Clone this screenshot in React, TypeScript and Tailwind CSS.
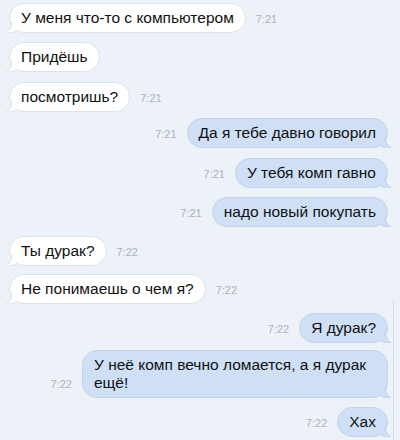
import React from 'react';

type Msg = {
  text: string;
  time: string;
  out: boolean;
  mt: string;
};

const messages: Msg[] = [
  { text: 'У меня что-то с компьютером', time: '7:21', out: false, mt: 'mt-[3px]' },
  { text: 'Придёшь', time: '', out: false, mt: 'mt-[9px]' },
  { text: 'посмотришь?', time: '7:21', out: false, mt: 'mt-[10px]' },
  { text: 'Да я тебе давно говорил', time: '7:21', out: true, mt: 'mt-[6px]' },
  { text: 'У тебя комп гавно', time: '7:21', out: true, mt: 'mt-[10px]' },
  { text: 'надо новый покупать', time: '7:21', out: true, mt: 'mt-[9px]' },
  { text: 'Ты дурак?', time: '7:22', out: false, mt: 'mt-[9px]' },
  { text: 'Не понимаешь о чем я?', time: '7:22', out: false, mt: 'mt-[8px]' },
  { text: 'Я дурак?', time: '7:22', out: true, mt: 'mt-[9px]' },
  { text: 'У неё комп вечно ломается, а я дурак ещё!', time: '7:22', out: true, mt: 'mt-[7px]' },
  { text: 'Хах', time: '7:22', out: true, mt: 'mt-[9px]' },
];

function Tail({ out }: { out: boolean }) {
  // small curled tail at the bottom corner of a bubble
  if (out) {
    return (
      <svg className="absolute right-[-4px] bottom-[-1px]" width="12" height="11" viewBox="0 0 12 11">
        <path d="M0 0 L6 0 C6 5 8 8 12 11 C6 11 2 9 0 7 Z" fill="#cfe0f6" />
        <path d="M6 0 C6 5 8 8 12 11 C6 11 3 10 1 8" fill="none" stroke="#bfd0e6" strokeWidth="1" />
      </svg>
    );
  }
  return (
    <svg className="absolute left-[-4px] bottom-[-1px]" width="12" height="11" viewBox="0 0 12 11">
      <path d="M12 0 L6 0 C6 5 4 8 0 11 C6 11 10 9 12 7 Z" fill="#ffffff" />
      <path d="M6 0 C6 5 4 8 0 11 C6 11 9 10 11 8" fill="none" stroke="#dbe1e9" strokeWidth="1" />
    </svg>
  );
}

function Bubble({ m }: { m: Msg }) {
  const time = m.time ? (
    <span className="mb-[8px] text-[11px] leading-[12px] text-[#aab2be] shrink-0">{m.time}</span>
  ) : null;

  return (
    <div className={`flex items-end gap-[10px] ${m.out ? 'justify-end' : 'justify-start'} ${m.mt}`}>
      {m.out && time}
      <div
        className={`relative max-w-[306px] rounded-[15px] border px-[11px] py-[5px] text-[15.5px] leading-[18px] text-[#111] ${
          m.out ? 'bg-[#cfe0f6] border-[#c3d4ea]' : 'bg-white border-[#dde3ea]'
        }`}
      >
        <Tail out={m.out} />
        <span className="relative">{m.text}</span>
      </div>
      {!m.out && time}
    </div>
  );
}

export default function App() {
  return (
    <div className="relative w-[400px] h-[440px] overflow-hidden bg-[#edf1f8] font-['Liberation_Sans',Arial,sans-serif]">
      <div className="flex flex-col pl-[9px] pr-[12px]">
        {messages.map((m, i) => (
          <Bubble key={i} m={m} />
        ))}
      </div>
      {/* scroll edge line on the right */}
      <div className="absolute right-[6px] top-[300px] bottom-0 w-px bg-[#d3d9e2]" />
    </div>
  );
}
